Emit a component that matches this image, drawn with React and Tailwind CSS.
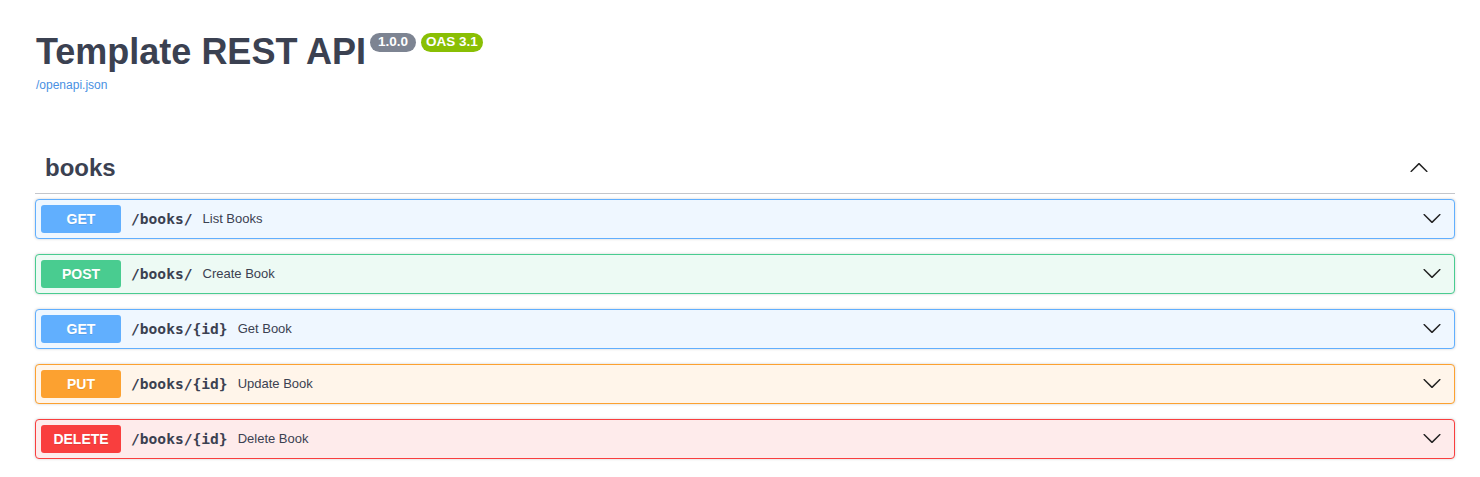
import React from "react";

const ops = [
  { method: "GET", path: "/books/", summary: "List Books", border: "border-[#61affe]", bg: "bg-[#eff7ff]", badge: "bg-[#61affe]" },
  { method: "POST", path: "/books/", summary: "Create Book", border: "border-[#49cc90]", bg: "bg-[#edfaf4]", badge: "bg-[#49cc90]" },
  { method: "GET", path: "/books/{id}", summary: "Get Book", border: "border-[#61affe]", bg: "bg-[#eff7ff]", badge: "bg-[#61affe]" },
  { method: "PUT", path: "/books/{id}", summary: "Update Book", border: "border-[#fca130]", bg: "bg-[#fff5ea]", badge: "bg-[#fca130]" },
  { method: "DELETE", path: "/books/{id}", summary: "Delete Book", border: "border-[#f93e3e]", bg: "bg-[#feebeb]", badge: "bg-[#f93e3e]" },
];

const Arrow = ({ up = false, className = "" }) => (
  <svg
    width="20"
    height="20"
    viewBox="0 0 20 20"
    className={className}
    style={up ? { transform: "rotate(180deg)" } : undefined}
  >
    <path
      fill="#222"
      d="M17.418 6.109c.272-.268.709-.268.979 0s.266.701 0 .969l-7.908 7.83c-.27.268-.707.268-.979 0l-7.908-7.83c-.27-.268-.27-.701 0-.969.271-.268.709-.268.979 0L10 13.25l7.418-7.141z"
    />
  </svg>
);

const OpBlock = ({ op }) => (
  <div
    className={`flex items-center h-[40px] mb-[15px] border rounded-[4px] shadow-[0_0_3px_rgba(0,0,0,0.19)] ${op.border} ${op.bg}`}
  >
    <div className="flex items-center flex-1 px-[5px]">
      <span
        className={`w-[80px] h-[28px] flex items-center justify-center rounded-[3px] text-white text-[14px] font-bold [text-shadow:0_1px_0_rgba(0,0,0,0.1)] ${op.badge}`}
      >
        {op.method}
      </span>
      <span className="px-[10px] font-['DejaVu_Sans_Mono',monospace] font-bold text-[14.6px] text-[#3b4151]">
        {op.path}
      </span>
      <span className="text-[13px] text-[#3b4151]">{op.summary}</span>
    </div>
    <Arrow className="mr-[12px] mt-[-3px]" />
  </div>
);

export default function App() {
  return (
    <div className="min-h-screen bg-white font-['Liberation_Sans',Arial,sans-serif] text-[#3b4151] pl-[35px] pr-[25px]">
      <div className="pt-[31px]">
        <div className="flex items-start">
          <h2 className="text-[36px] font-bold leading-[41px] text-[#3b4151] pl-[1px]">
            Template REST API
          </h2>
          <span className="ml-[4px] mt-[2px] h-[19px] px-[8px] flex items-center rounded-full bg-[#7d8492] text-white text-[13.5px] font-bold">
            1.0.0
          </span>
          <span className="ml-[5px] mt-[2px] h-[19px] px-[5px] flex items-center rounded-full bg-[#89bf04] text-white text-[13.5px] font-bold">
            OAS 3.1
          </span>
        </div>
        <a className="block mt-[6px] text-[12px] leading-[14px] text-[#4990e2] pl-[1px]">
          /openapi.json
        </a>
      </div>

      <div className="mt-[51px]">
        <div className="flex items-center justify-between h-[51px] border-b border-[#c4c6cb] pl-[10px] pr-[26px]">
          <h3 className="text-[24px] font-bold text-[#3b4151]">books</h3>
          <Arrow up />
        </div>
        <div className="pt-[5px]">
          {ops.map((op, i) => (
            <OpBlock key={i} op={op} />
          ))}
        </div>
      </div>
    </div>
  );
}
